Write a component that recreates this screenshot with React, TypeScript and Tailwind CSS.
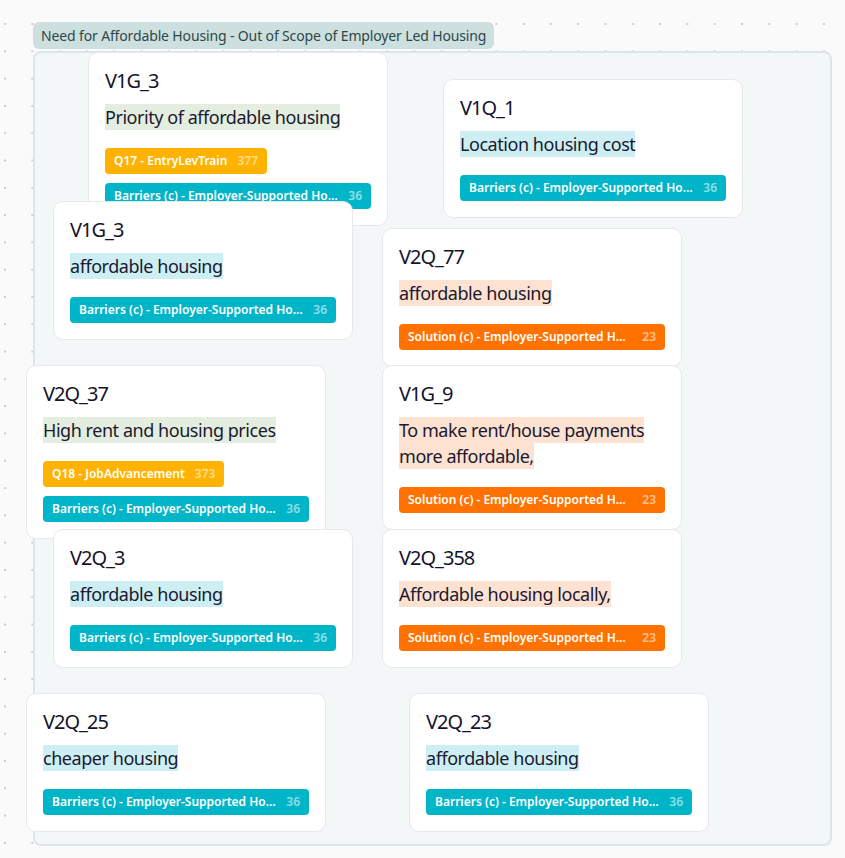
import React from "react";

type Tag = { label: string; count: string; kind: "amber" | "cyan" | "orange"; fit?: boolean };
type Card = { pos: string; title: string; body: string; hl: "green" | "cyan" | "peach"; tags: Tag[] };

const barriers: Tag = { label: "Barriers (c) - Employer-Supported Housing", count: "36", kind: "cyan" };
const solution: Tag = { label: "Solution (c) - Employer-Supported Housing", count: "23", kind: "orange" };

const cards: Card[] = [
  {
    pos: "left-[88px] top-[52px]",
    title: "V1G_3",
    body: "Priority of affordable housing",
    hl: "green",
    tags: [{ label: "Q17 - EntryLevTrain", count: "377", kind: "amber", fit: true }, barriers],
  },
  { pos: "left-[443px] top-[79px]", title: "V1Q_1", body: "Location housing cost", hl: "cyan", tags: [barriers] },
  { pos: "left-[53px] top-[201px]", title: "V1G_3", body: "affordable housing", hl: "cyan", tags: [barriers] },
  { pos: "left-[382px] top-[228px]", title: "V2Q_77", body: "affordable housing", hl: "peach", tags: [solution] },
  {
    pos: "left-[26px] top-[365px]",
    title: "V2Q_37",
    body: "High rent and housing prices",
    hl: "green",
    tags: [{ label: "Q18 - JobAdvancement", count: "373", kind: "amber", fit: true }, barriers],
  },
  {
    pos: "left-[382px] top-[365px]",
    title: "V1G_9",
    body: "To make rent/house payments more affordable,",
    hl: "peach",
    tags: [solution],
  },
  { pos: "left-[53px] top-[529px]", title: "V2Q_3", body: "affordable housing", hl: "cyan", tags: [barriers] },
  { pos: "left-[382px] top-[529px]", title: "V2Q_358", body: "Affordable housing locally,", hl: "peach", tags: [solution] },
  { pos: "left-[26px] top-[693px]", title: "V2Q_25", body: "cheaper housing", hl: "cyan", tags: [barriers] },
  { pos: "left-[409px] top-[693px]", title: "V2Q_23", body: "affordable housing", hl: "cyan", tags: [barriers] },
];

const hlClass = {
  green: "bg-[#e4eee0]",
  cyan: "bg-[#cdeff3]",
  peach: "bg-[#fde2d1]",
};

const tagClass = {
  amber: "bg-[#ffb300]",
  cyan: "bg-[#00b5c8]",
  orange: "bg-[#ff7200]",
};

function TagPill({ tag }: { tag: Tag }) {
  return (
    <div
      className={`flex h-[26px] items-center gap-[10px] rounded-[4px] px-[9px] text-[12px] font-semibold text-white ${
        tagClass[tag.kind]
      } ${tag.fit ? "w-fit" : "w-full"}`}
    >
      <span className={tag.fit ? "whitespace-nowrap" : "min-w-0 flex-1 truncate"}>{tag.label}</span>
      <span className="shrink-0 text-white/55">{tag.count}</span>
    </div>
  );
}

function CardView({ card }: { card: Card }) {
  return (
    <div
      className={`absolute ${card.pos} w-[300px] rounded-[10px] border border-[#e6e8ea] bg-white px-[16px] pb-[16px] pt-[14px]`}
    >
      <div className="text-[20px] leading-[28px] tracking-[-1px] text-[#15132c]">{card.title}</div>
      <p className="mt-[9px] text-[18px] leading-[26px] tracking-[-0.45px] text-[#1b1930]">
        <span className={`${hlClass[card.hl]} py-[1px] [box-decoration-break:clone]`}>{card.body}</span>
      </p>
      <div className="mt-[18px] flex flex-col gap-[9px]">
        {card.tags.map((t, i) => (
          <TagPill key={i} tag={t} />
        ))}
      </div>
    </div>
  );
}

export default function App() {
  return (
    <div
      className="relative h-[858px] w-[845px] overflow-hidden bg-[#fafafa] bg-[radial-gradient(circle,#c9cccc_1px,transparent_1.3px)] bg-[length:27.3px_27.3px] bg-[position:-8.65px_10.35px]"
      style={{ fontFamily: '"Noto Sans", "Open Sans", sans-serif' }}
    >
      <div className="absolute left-[33px] top-[22px] flex h-[27px] items-center rounded-[6px] bg-[#cde0df] px-[8px] text-[14px] tracking-[-0.14px] text-[#2d4848]">
        Need for Affordable Housing - Out of Scope of Employer Led Housing
      </div>
      <div className="absolute left-[33px] top-[51px] h-[795px] w-[799px] rounded-[8px] border-2 border-[#dae6e7] bg-[#f4f7f8]" />
      {cards.map((c, i) => (
        <CardView key={i} card={c} />
      ))}
    </div>
  );
}
